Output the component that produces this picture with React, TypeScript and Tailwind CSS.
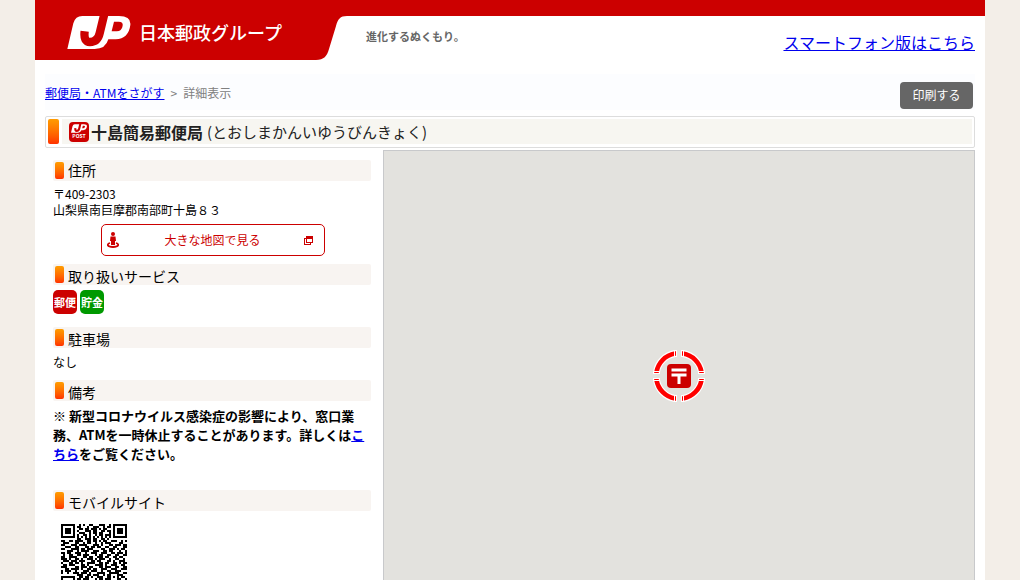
import type { ReactNode } from "react";

/*
* Rows of the mobile site QR code, "#" is a dark module
*/
const QR_ROWS = [
  "#######..#.#..##...###..#.#######",
  "#.....#.##...#..###..#.##.#.....#",
  "#.###.#..##.##.###.#.##...#.###.#",
  "#.###.#.#...###.##..##.##.#.###.#",
  "#.###.#..###..#.##.##...#.#.###.#",
  "#.....#.#..##.#..#.##.###.#.....#",
  "#######.#.#.#.#.#.#.#.#.#.#######",
  "........##..###.##..##.#.........",
  "##..##.####..##.##.#.##..###..#.#",
  ".###...##..#.##..#..#.###....##..",
  "##...###.####...###.#...##.###.##",
  "..###..##...##.##.##..##..##...##",
  "##...####.##.###....##..###.#.##.",
  "...###..#.####..###..##.##...#..#",
  "##.##..###..#..###..###..##.###.#",
  ".#..##..##.###...#.##..##..##..##",
  "##..####...##.##..###.##..##.##..",
  "###.#..##.#..###.#.###..#..##..#.",
  ".###.###.###...##.##...##.#..###.",
  "#...##.##.#..####..##.##..##.#.##",
  ".##.###...##.#...####.#..###..##.",
  "###....##.###.##...##.###..##..##",
  "..##.####.#..##.##..###..###..###",
  "#.###..#...###.###..#..##..###...",
  "#..#..###.###.#...####..#####..##",
  "........###..##.###..#.##...###..",
  "#######..##.##.#..###..##.#.#.##.",
  "#.....#.##.###...#.##.###...##..#",
  "#.###.#.#...##.##..##.#.#####.###",
  "#.###.#..###.#.###.#..##..#..##..",
  "#.###.#.##.#..#...##.###..##.##.#",
  "#.....#..#..###.##.##.#.##..##..#",
  "#######.##.##..##..#.###..##..##.",
];

function JpMark({ className, ground }: { className: string; ground: string }) {
  return (
    <svg className={className} viewBox="0 0 190 99" aria-hidden="true">
      <path d="M0 99 L18 22 Q24 0 45 0 H155 Q192 0 189 27 Q184 68 145 70 H123 Q115 99 82 99 Z" fill="#fff" />
      <path d="M111 -6 L97 52 Q91 78 68 78 Q48 78 52 46" fill="none" stroke={ground} strokeWidth="25" />
      <path d="M140 17 H154 Q168 17 166 29 Q163 46 148 46 H133 Z" fill={ground} />
    </svg>
  );
}

function Section({ title, children, low = true }: { title: string; children: ReactNode; low?: boolean }) {
  return (
    <section>
      <h2 className="flex h-[21px] items-center gap-1 rounded-xs bg-[#f8f4f1] pl-0.5 text-sm leading-5">
        <span className="h-[17px] w-[9px] rounded-xs bg-linear-to-b from-[#ff9c00] to-[#ff3000]" />
        <span className={low ? "pt-0.5" : "pb-0.5"}>{title}</span>
      </h2>
      {children}
    </section>
  );
}

function Header() {
  return (
    <header className="flex items-start">
      <div className="flex h-[60px] w-[278px] shrink-0 items-center gap-2 bg-[#cc0000] pb-0.5 pl-8 pt-1.5">
        <JpMark className="h-[33px] w-16 shrink-0" ground="#cc0000" />
        <span className="whitespace-nowrap text-lg font-medium leading-6 text-white">日本郵政グループ</span>
      </div>
      <svg className="h-[60px] w-10 shrink-0" viewBox="0 0 40 60" aria-hidden="true">
        <path d="M0 0 H40 V16 H34 C27 16 25 19 23 26 L16 49 C14 56 11 60 3 60 H0 Z" fill="#cc0000" />
      </svg>
      <div className="flex grow justify-between border-t-16 border-[#cc0000] pl-[13px] pr-[10px]">
        <p className="pt-3 text-[11px] font-bold leading-4 text-[#666]">進化するぬくもり。</p>
        <a className="pt-3.5 leading-6 text-[#0000ee] underline" href="#smartphone">スマートフォン版はこちら</a>
      </div>
    </header>
  );
}

function Pegman() {
  return (
    <svg className="h-4 w-3" viewBox="0 0 12 16" fill="#cc0000" aria-hidden="true">
      <circle cx="6" cy="2" r="2" />
      <path d="M3.5 4.5 H8.5 L9 9 H8 V13 H4 V9 H3 Z" />
      <path d="M3 11 C-0.5 12 0 15 6 15 C12 15 12.5 12 9 11" fill="none" stroke="#cc0000" strokeWidth="1.8" />
    </svg>
  );
}

function MapMarker() {
  return (
    <svg className="h-[52px] w-[52px]" viewBox="-26 -26 52 52" role="img" aria-label="郵便局">
      {[0, 90, 180, 270].map((angle) => (
        <g key={angle} transform={`rotate(${angle})`} fill="none">
          <path d="M2 -22.5 H4 A22.5 22.5 0 0 1 22.5 -4 V-2" stroke="#fff" strokeWidth="7" />
          <path d="M3 -22.5 H4 A22.5 22.5 0 0 1 22.5 -4 V-3" stroke="#ff0000" strokeWidth="4.6" />
          <path d="M4.5 -26 V-19 M26 -4.5 H19" stroke="#fff" strokeWidth="1" />
        </g>
      ))}
      <rect x="-12" y="-12" width="24" height="24" rx="4" fill="#cc0000" />
      <path d="M-7.5 -6 H7.5 M-7.5 -1 H7.5 M0 -1 V8" stroke="#fff" strokeWidth="3" />
    </svg>
  );
}

function QrCode() {
  return (
    <svg className="h-[66px] w-[66px]" viewBox="0 0 33 33" shapeRendering="crispEdges" role="img" aria-label="QRコード">
      {QR_ROWS.map((row, y) =>
        row.split("").map((cell, x) =>
          cell === "#" ? <rect key={`${x}-${y}`} x={x} y={y} width="1" height="1" /> : null
        )
      )}
    </svg>
  );
}

export default function App() {
  return (
    <div className="min-h-screen bg-[#f3eee8] font-['Noto_Sans_CJK_JP',sans-serif] text-black">
      <div className="mx-auto min-h-screen max-w-[950px] bg-white">
        <Header />

        <div className="px-[10px] pb-2 pt-[14px]">
          {/* Breadcrumb */}
          <div className="flex h-9 items-start justify-between bg-[#fcfdff] pr-0.5 text-xs">
            <nav className="flex gap-1.5 pt-2.5 leading-[18px] text-[#808080]">
              <a className="text-[#0000ee] underline" href="#search">郵便局・ATMをさがす</a>
              <span>&gt;</span>
              <span>詳細表示</span>
            </nav>
            <button className="mt-2 h-[27px] w-[73px] rounded-sm bg-[#666] pb-0.5 text-white" type="button">印刷する</button>
          </div>

          {/* Office name */}
          <div className="mt-1.5 flex h-8 gap-[3px] rounded-xs border border-[#ddd] px-0.5 pb-[3px] pt-0.5">
            <span className="w-[11px] rounded-xs bg-linear-to-b from-[#ff9c00] to-[#ff3000]" />
            <h1 className="flex grow items-center gap-[2px] bg-[#f7f6f1] pl-[7px] text-base leading-6 text-[#222]">
              <span className="flex h-5 w-5 flex-col items-center justify-center rounded-sm bg-[#cc0000]">
                <JpMark className="h-[9px] w-4" ground="#cc0000" />
                <span className="text-[5px] font-bold leading-[6px] text-white">POST</span>
              </span>
              <span className="font-bold">十島簡易郵便局</span>
              <span className="pl-0.5 text-[15px] font-normal">(とおしまかんいゆうびんきょく)</span>
            </h1>
          </div>

          <div className="mt-0.5 flex items-start gap-3">
            <div className="w-[326px] shrink-0 pl-2 pt-2.5 text-xs">
              <Section title="住所" low={false}>
                <p className="pt-[5px] leading-4">
                  〒409-2303
                  <br />
                  山梨県南巨摩郡南部町十島８３
                </p>
                <a
                  className="mb-2 ml-12 mt-1.5 flex h-8 w-56 items-center rounded-[5px] border border-[#cc0000] pl-[5px] pr-[11px] text-[#cc0000]"
                  href="#map"
                >
                  <Pegman />
                  <span className="grow pl-0.5 text-center">大きな地図で見る</span>
                  <svg className="h-[9px] w-[9px]" viewBox="0 0 9 9" fill="#cc0000" shapeRendering="crispEdges" aria-hidden="true">
                    <path d="M2 0 H9 V7 H2 Z M3 3 V6 H8 V3 Z M0 2 H1 V8 H7 V9 H0 Z M1 2 H2 V3 H1 Z M6 7 H7 V8 H6 Z" fillRule="evenodd" />
                  </svg>
                </a>
              </Section>

              <Section title="取り扱いサービス">
                <ul className="flex gap-[3px] pb-[13px] pt-[5px] text-[11px] font-bold leading-6 text-white">
                  <li className="h-6 w-6 rounded-[5px] bg-[#cc0000] text-center">郵便</li>
                  <li className="h-6 w-6 rounded-[5px] bg-[#009900] text-center">貯金</li>
                </ul>
              </Section>

              <Section title="駐車場">
                <p className="pb-2.5 pt-1.5 leading-4">なし</p>
              </Section>

              <Section title="備考">
                <p className="pb-[27px] pt-[5px] text-[13px] font-bold leading-[19px]">
                  <span className="font-normal">※ </span>
                  新型コロナウイルス感染症の影響により、窓口業務、ATMを一時休止することがあります。詳しくは
                  <a className="text-[#0000ee] underline" href="#notice">こちら</a>
                  をご覧ください。
                </p>
              </Section>

              <Section title="モバイルサイト">
                <div className="pl-2 pt-[13px]">
                  <QrCode />
                </div>
              </Section>
            </div>

            {/* Map */}
            <div className="flex h-[452px] grow items-center justify-center border border-[#c8c9cb] bg-[#e3e2de]">
              <MapMarker />
            </div>
          </div>
        </div>
      </div>
    </div>
  );
}
